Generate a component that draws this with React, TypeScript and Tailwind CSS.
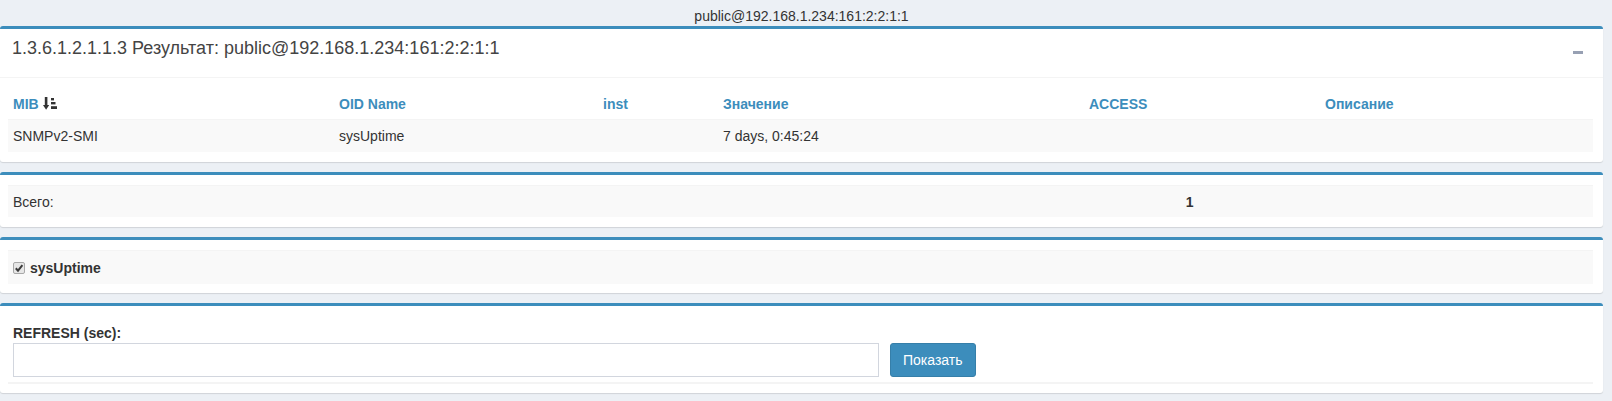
import React from 'react'

const font = { fontFamily: '"Liberation Sans", Arial, sans-serif' }

function SortIcon() {
  return (
    <svg width="14" height="13" viewBox="0 0 14 13" className="inline-block ml-[4px] -mt-[4px] align-middle">
      <rect x="1.8" y="0" width="2.6" height="9" fill="#333" />
      <path d="M0 8 L6.2 8 L3.1 12.8 Z" fill="#333" />
      <rect x="8" y="1" width="3" height="2.4" fill="#333" />
      <rect x="8" y="5" width="4.5" height="2.4" fill="#333" />
      <rect x="8" y="9.2" width="6" height="2.8" fill="#333" />
    </svg>
  )
}

function CheckBox() {
  return (
    <span className="inline-block w-[12px] h-[12px] border border-[#a8a8a8] rounded-[2px] bg-[#e6e6e6] align-middle mr-[5px] -mt-[3px] relative">
      <svg width="10" height="10" viewBox="0 0 10 10" className="absolute left-[0px] top-[0px]">
        <path d="M1.8 5.2 L4 7.6 L8.4 2.2" stroke="#3a3a3a" strokeWidth="2" fill="none" />
      </svg>
    </span>
  )
}

function Box({ children }: { children: React.ReactNode }) {
  return (
    <div className="bg-white border-t-[3px] border-[#3c8dbc] rounded-[3px] shadow-[0_1px_1px_rgba(0,0,0,0.12)] mb-[10px]">
      {children}
    </div>
  )
}

export default function App() {
  const cols = ['MIB', 'OID Name', 'inst', 'Значение', 'ACCESS', 'Описание']
  const row = ['SNMPv2-SMI', 'sysUptime', '', '7 days, 0:45:24', '', '']

  return (
    <div className="min-h-screen bg-[#ecf0f5] text-[#333] text-[14px] pr-[9px]" style={font}>
      <div className="h-[26px] pt-[6px] leading-[20px] text-center">public@192.168.1.234:161:2:2:1:1</div>

      {/* result box */}
      <Box>
        <div className="flex items-start justify-between h-[49px] pl-[12px] pr-[10px] pt-[10px] border-b border-[#f4f4f4]">
          <h3 className="text-[18px] leading-[18px] text-[#444]">1.3.6.1.2.1.1.3 Результат: public@192.168.1.234:161:2:2:1:1</h3>
          <span className="block w-[10px] h-[3px] bg-[#97a0b3] mr-[10px] mt-[12px]" />
        </div>
        <div className="pl-[8px] pr-[10px] pt-[10px] pb-[10px]">
          <div className="grid grid-cols-[326px_264px_120px_366px_236px_1fr]">
            {cols.map((c, i) => (
              <div key={i} className="px-[5px] pt-[6px] pb-[5px] leading-[20px] font-bold text-[#3c8dbc]">
                {c}
                {i === 0 && <SortIcon />}
              </div>
            ))}
            {row.map((c, i) => (
              <div key={i} className="px-[5px] pt-[6px] pb-[6px] leading-[20px] bg-[#f9f9f9] border-t border-[#f4f4f4]">
                {c}
              </div>
            ))}
          </div>
        </div>
      </Box>

      {/* total */}
      <Box>
        <div className="pl-[8px] pr-[10px] py-[10px]">
          <table className="w-full">
            <tbody>
              <tr className="bg-[#f9f9f9]">
                <td className="px-[5px] pt-[6px] pb-[5px] leading-[20px] border-t border-[#f4f4f4]">Всего:</td>
                <td className="px-[5px] pt-[6px] pb-[5px] leading-[20px] border-t border-[#f4f4f4] font-bold">1</td>
              </tr>
            </tbody>
          </table>
        </div>
      </Box>

      {/* selected oids */}
      <Box>
        <div className="pl-[8px] pr-[10px] pt-[10px] pb-[9px]">
          <div className="bg-[#f9f9f9] border-t border-[#f4f4f4] h-[34px] px-[5px] pt-[7px]">
            <label className="font-bold leading-[20px]">
              <CheckBox />
              sysUptime
            </label>
          </div>
        </div>
      </Box>

      {/* refresh form */}
      <Box>
        <div className="pl-[8px] pr-[10px] pt-[17px] pb-[9px]">
          <div className="px-[5px]">
            <div className="font-bold leading-[20px]">REFRESH (sec):</div>
            <div className="flex items-center gap-[11px]">
              <input type="text" className="w-[866px] h-[34px] border border-[#d2d6de] px-[12px] outline-none" />
              <button className="h-[34px] px-[12px] bg-[#3c8dbc] border border-[#367fa9] rounded-[3px] text-white leading-[20px]">
                Показать
              </button>
            </div>
          </div>
          <div className="mt-[5px] h-[2px] bg-[#f4f4f4]" />
        </div>
      </Box>
    </div>
  )
}
